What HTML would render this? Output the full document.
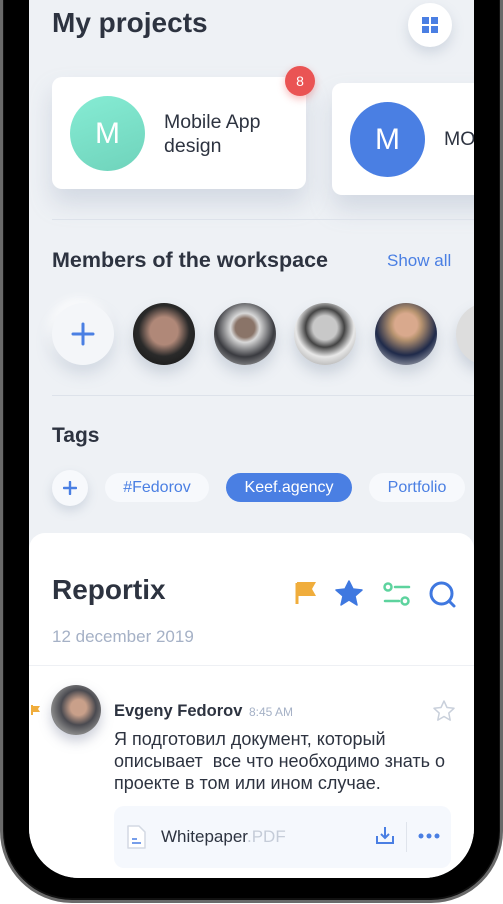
<!DOCTYPE html>
<html><head><meta charset="utf-8"><style>
*{margin:0;padding:0;box-sizing:border-box}
body{width:503px;height:904px;overflow:hidden;background:#fff;font-family:"Liberation Sans","Noto Sans CJK SC",sans-serif;position:relative}
.frame{position:absolute;left:0;top:-100px;width:503px;height:1003px;background:#111;border-radius:0 0 72px 72px;border:3px solid #6a6a6a;border-top:none}
.frame2{position:absolute;left:4px;top:-100px;width:495px;height:998px;background:#000;border-radius:0 0 68px 68px}
.screen{position:absolute;left:29px;top:0;width:445px;height:878px;background:#eef1f5;border-radius:0 0 50px 50px;overflow:hidden}
.abs{position:absolute}
.h{color:#2d3340;font-weight:bold}
.card{position:absolute;background:#fff;border-radius:10px;box-shadow:0 14px 24px rgba(140,155,180,.28)}
.av{position:absolute;border-radius:50%;color:#fff;font-size:30px;display:flex;align-items:center;justify-content:center}
.mem{position:absolute;top:303px;width:62px;height:62px;border-radius:50%;box-shadow:0 8px 14px rgba(120,135,160,.3)}
.tag{position:absolute;top:473px;height:29px;border-radius:15px;background:#f7f9fc;color:#4a7fe3;font-size:16px;display:flex;align-items:center;justify-content:center}
.line{position:absolute;left:23px;right:0;height:1px;background:#dde2ea}
</style></head><body>
<div class="frame"></div><div class="frame2"></div>
<div class="screen">
 <div class="abs h" style="left:23px;top:7px;font-size:28px">My projects</div>
 <div class="abs" style="left:379px;top:3px;width:44px;height:44px;border-radius:50%;background:#fff;box-shadow:0 6px 12px rgba(140,155,180,.3)">
  <svg class="abs" style="left:14px;top:14px" width="16" height="16"><rect x="0" y="0" width="7" height="7" fill="#4a7fe3"/><rect x="9" y="0" width="7" height="7" fill="#4a7fe3"/><rect x="0" y="9" width="7" height="7" fill="#4a7fe3"/><rect x="9" y="9" width="7" height="7" fill="#4a7fe3"/></svg>
 </div>
 <div class="card" style="left:23px;top:77px;width:254px;height:112px">
  <div class="av" style="left:18px;top:19px;width:75px;height:75px;background:linear-gradient(160deg,#86ecd4,#6fd3bb)">M</div>
  <div class="abs" style="left:112px;top:33px;font-size:19.5px;line-height:24px;color:#2d3340">Mobile App<br>design</div>
 </div>
 <div class="abs" style="left:256px;top:66px;width:30px;height:30px;border-radius:50%;background:#ea5454;color:#fff;font-size:14px;display:flex;align-items:center;justify-content:center;box-shadow:0 3px 8px rgba(234,84,84,.4)">8</div>
 <div class="card" style="left:303px;top:83px;width:180px;height:112px">
  <div class="av" style="left:18px;top:19px;width:75px;height:75px;background:#4a7fe3">M</div>
  <div class="abs" style="left:112px;top:45px;font-size:19.5px;color:#2d3340">MO</div>
 </div>
 <div class="line" style="top:219px"></div>
 <div class="abs h" style="left:23px;top:248px;font-size:21.5px">Members of the workspace</div>
 <div class="abs" style="left:358px;top:251px;font-size:17px;color:#4a7fe3">Show all</div>
 <div class="mem" style="left:23px;top:303px;background:#f4f6f9;box-shadow:0 8px 16px rgba(140,155,180,.3),-4px -4px 10px #fff">
  <svg class="abs" style="left:19px;top:19px" width="24" height="24"><path d="M12 2v20M2 12h20" stroke="#4a7fe3" stroke-width="3" stroke-linecap="round"/></svg>
 </div>
 <div class="mem" style="left:104px;background:radial-gradient(circle at 50% 45%,#b08878 0 30%,#2a2a2a 55%,#111)"></div>
 <div class="mem" style="left:185px;background:radial-gradient(circle at 50% 40%,#8a7468 0 20%,#d8d8d8 30%,#3a3b40 60%,#ccc)"></div>
 <div class="mem" style="left:265px;background:radial-gradient(circle at 50% 40%,#c8c8c8 0 25%,#444 40%,#e8e8e8 60%,#888)"></div>
 <div class="mem" style="left:346px;background:radial-gradient(circle at 50% 35%,#d9a98d 0 22%,#b89470 30%,#1f2a4a 60%,#ddd)"></div>
 <div class="mem" style="left:427px;background:#ddd"></div>
 <div class="line" style="top:395px"></div>
 <div class="abs h" style="left:23px;top:424px;font-size:21px">Tags</div>
 <div class="abs" style="left:23px;top:470px;width:36px;height:36px;border-radius:50%;background:#f7f9fc;box-shadow:0 5px 10px rgba(140,155,180,.3)">
  <svg class="abs" style="left:11px;top:11px" width="14" height="14"><path d="M7 1v12M1 7h12" stroke="#4a7fe3" stroke-width="2.4" stroke-linecap="round"/></svg>
 </div>
 <div class="tag" style="left:76px;width:104px">#Fedorov</div>
 <div class="tag" style="left:197px;width:126px;background:#4a7fe3;color:#fff">Keef.agency</div>
 <div class="tag" style="left:340px;width:96px">Portfolio</div>
 <div class="abs" style="left:0;top:533px;width:445px;height:400px;background:#fff;border-radius:16px 16px 0 0">
  <div class="abs h" style="left:23px;top:41px;font-size:28px">Reportix</div>
  <svg class="abs" style="left:266px;top:48px" width="22" height="24"><path d="M2 2v21" stroke="#f0ad3c" stroke-width="3"/><path d="M2 1h19l-4 7 4 7H2z" fill="#f0ad3c"/></svg>
  <svg class="abs" style="left:306px;top:47px" width="28" height="26"><path d="M14 1l4 8 9 1-7 6 2 9-8-5-8 5 2-9-7-6 9-1z" fill="#3f78e0" stroke="#3f78e0" stroke-linejoin="round" stroke-width="1.5"/></svg>
  <svg class="abs" style="left:353px;top:48px" width="30" height="26"><circle cx="6" cy="6" r="3.5" fill="none" stroke="#5dd39e" stroke-width="2.5"/><path d="M13 6h14M3 20h14" stroke="#5dd39e" stroke-width="2.5" stroke-linecap="round"/><circle cx="23" cy="20" r="3.5" fill="none" stroke="#5dd39e" stroke-width="2.5"/></svg>
  <svg class="abs" style="left:400px;top:48px" width="28" height="28"><circle cx="12.5" cy="12.5" r="10.5" fill="none" stroke="#3f78e0" stroke-width="3"/><path d="M20 20l5 5" stroke="#3f78e0" stroke-width="3" stroke-linecap="round"/></svg>
  <div class="abs" style="left:23px;top:94px;font-size:17px;color:#a5b1c6">12 december 2019</div>
  <div class="abs" style="left:0;right:0;top:132px;height:1px;background:#eef0f4"></div>
  <svg class="abs" style="left:2px;top:172px" width="10" height="10"><path d="M1 0v10" stroke="#f0ad3c" stroke-width="2"/><path d="M1 1h8l-2 3 2 3H1z" fill="#f0ad3c"/></svg>
  <div class="abs" style="left:22px;top:152px;width:50px;height:50px;border-radius:50%;background:radial-gradient(circle at 55% 45%,#c9a08a 0 20%,#4a4a50 45%,#888 70%,#3a4b7a);box-shadow:0 6px 12px rgba(100,110,140,.35)"></div>
  <div class="abs h" style="left:85px;top:169px;font-size:16.5px">Evgeny Fedorov <span style="font-weight:normal;font-size:12px;color:#a5b1c6;margin-left:2px">8:45 AM</span></div>
  <svg class="abs" style="left:403px;top:166px" width="24" height="23"><path d="M12 2l3 6.5 7 .8-5.2 4.8 1.4 7-6.2-3.6-6.2 3.6 1.4-7L2 9.3l7-.8z" fill="none" stroke="#c9d0db" stroke-width="1.5" stroke-linejoin="round"/></svg>
  <div class="abs" style="left:85px;top:195px;font-size:18px;line-height:22px;color:#2d3340;width:380px;white-space:nowrap">Я подготовил документ, который<br>описывает&nbsp; все что необходимо знать о<br>проекте в том или ином случае.</div>
  <div class="abs" style="left:85px;top:273px;width:337px;height:62px;background:#f5f8fd;border-radius:10px">
   <svg class="abs" style="left:12px;top:19px" width="21" height="24"><path d="M2 1h11l6 6v16H2z" fill="#fff" stroke="#d3d9e3" stroke-width="1.5" stroke-linejoin="round"/><path d="M6 14h5M6 18h9" stroke="#4a7fe3" stroke-width="1.5"/></svg>
   <div class="abs" style="left:47px;top:21px;font-size:17px;color:#2d3340">Whitepaper<span style="color:#c5ccd8">.PDF</span></div>
   <svg class="abs" style="left:261px;top:19px" width="20" height="20"><path d="M10 2v11M6 9l4 4 4-4" fill="none" stroke="#4a7fe3" stroke-width="2"/><path d="M2 11v7h16v-7" fill="none" stroke="#4a7fe3" stroke-width="2"/></svg>
   <div class="abs" style="left:292px;top:16px;width:1px;height:30px;background:#dfe4ec"></div>
   <svg class="abs" style="left:304px;top:26px" width="22" height="8"><circle cx="3" cy="4" r="2.5" fill="#4a7fe3"/><circle cx="11" cy="4" r="2.5" fill="#4a7fe3"/><circle cx="19" cy="4" r="2.5" fill="#4a7fe3"/></svg>
  </div>
 </div>
</div>
</body></html>
